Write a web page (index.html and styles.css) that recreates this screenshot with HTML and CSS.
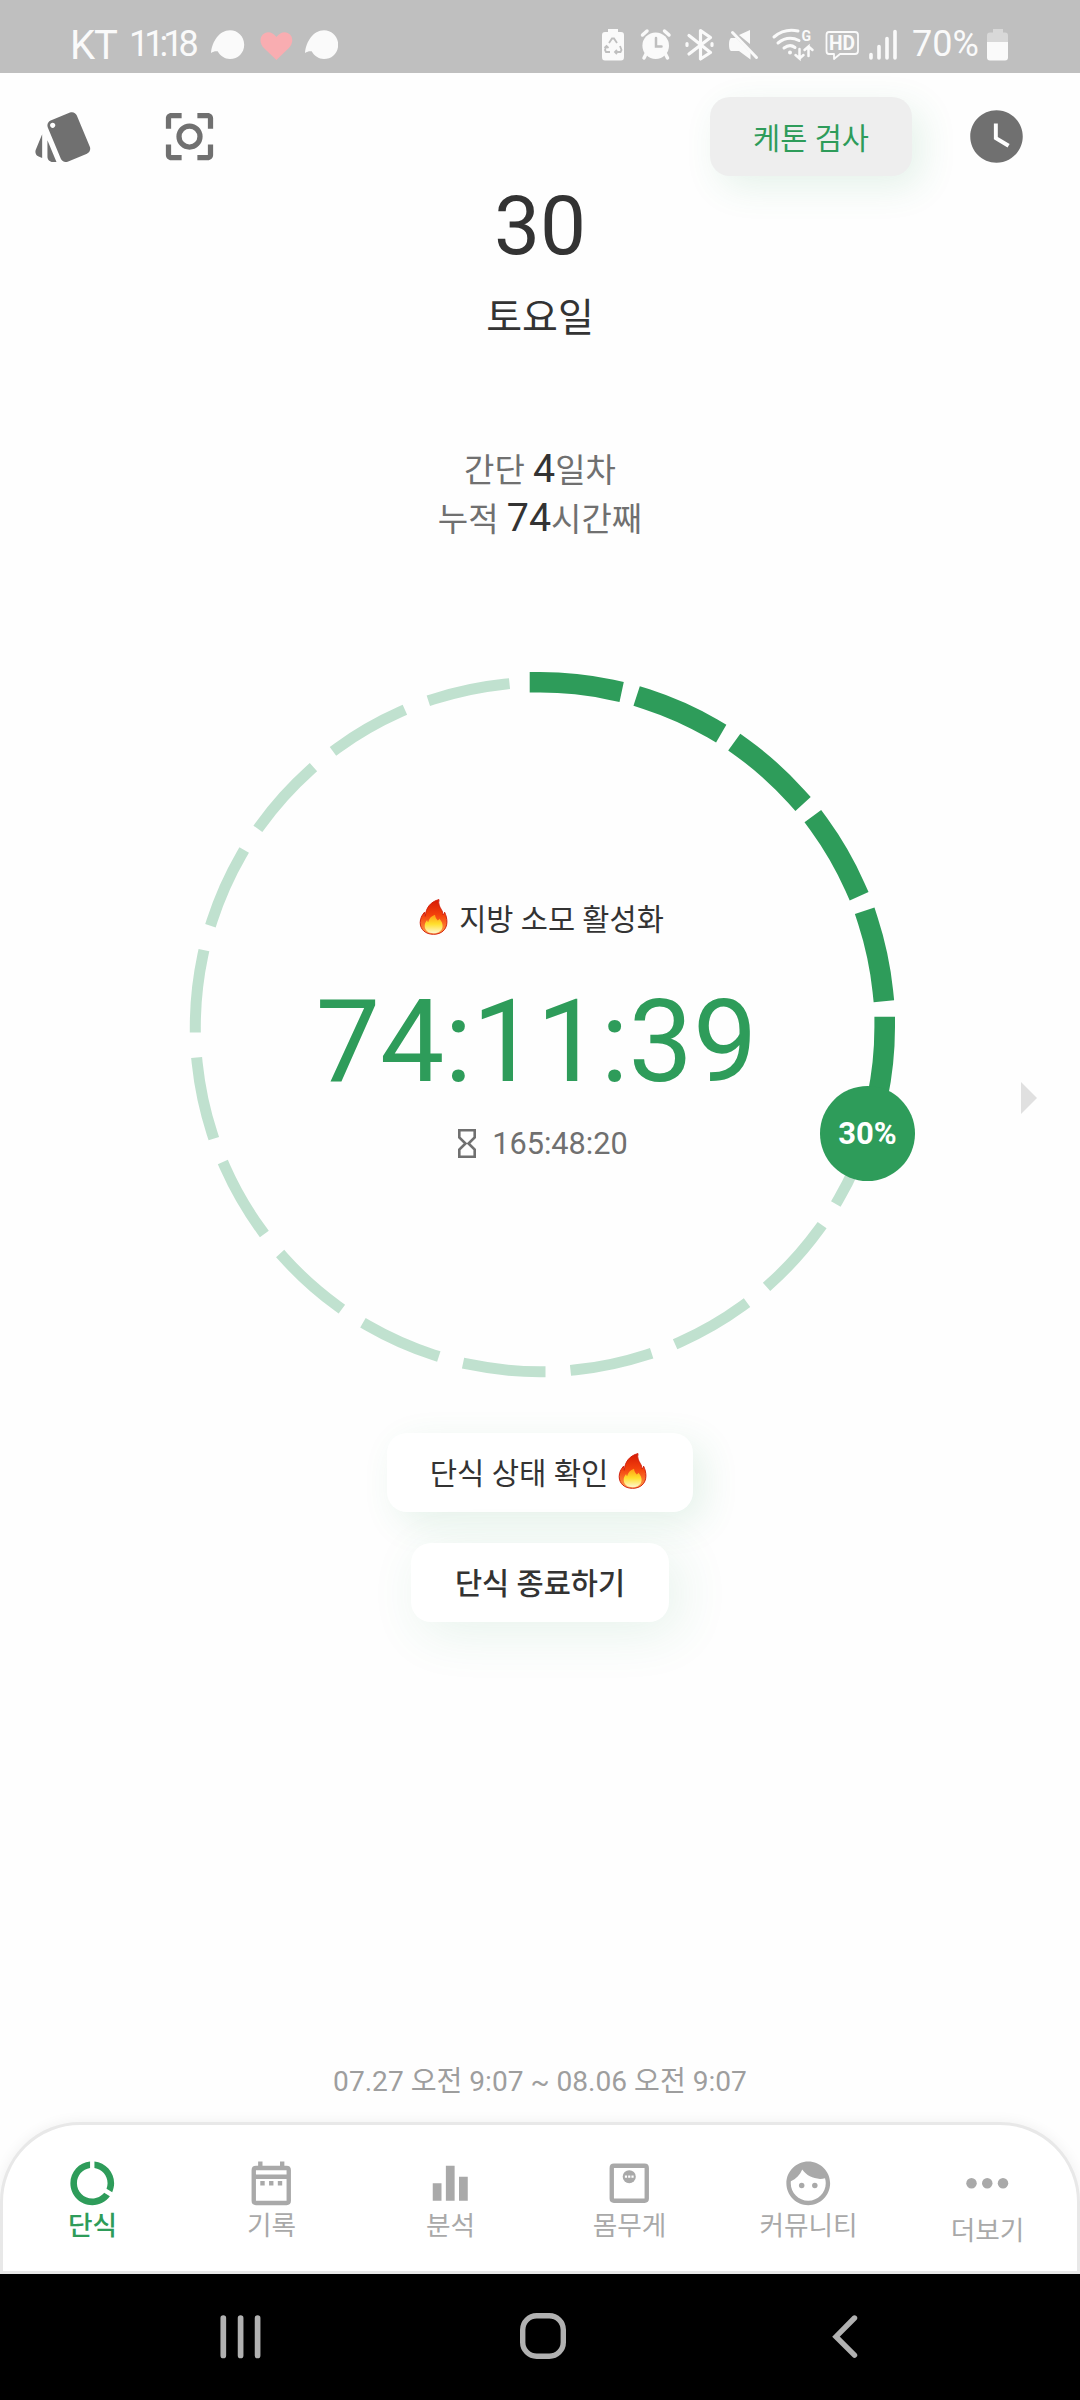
FILE: index.html
```html
<!DOCTYPE html>
<html lang="ko">
<head>
    <meta charset="UTF-8">
    <meta name="viewport" content="width=device-width, initial-scale=1.0">
    <title>단식</title>
    <link rel="stylesheet" href="styles.css">
</head>
<body>

<!-- Status bar -->
<div class="status-bar">
    <span class="carrier">KT</span>
    <span class="clock">11:18</span>
    <svg class="notice-icons" width="128" height="73" viewBox="210 0 128 73">
        <g fill="#fafafa">
            <path id="bubble" d="M230 30.300c8 0 14.200 6.300 14.200 14.400S238 59 230 59c-5.400 0-9.700-3-12.300-7.700-2.400-.4-4.500.3-6.700 1.700C212 42 219 30.300 230 30.300z"/>
            <use href="#bubble" x="94"/>
        </g>
        <path fill="#f9adb1" d="M276.400 60l-12-11.500c-5-5-4.700-10.500-1.800-13.800 3.400-3.800 9.800-3.400 13.800 2.300 4-5.700 10.400-6.100 13.800-2.300 2.900 3.300 3.200 8.800-1.800 13.800z"/>
    </svg>
    <svg class="status-icons" width="304" height="73" viewBox="596 0 304 73">
        <!-- battery saver -->
        <path fill="#fafafa" d="M608 29h10v3h3q3 0 3 3v22q0 3.500-3 3.500h-16q-3 0-3-3.500v-22q0-3 3-3h3z"/>
        <path fill="none" stroke="#bfbfbf" stroke-width="1.800" d="M609 43l3-4.500h2l3 4.500M606.500 46l-1.500 4 1 2h4M620 46l1.500 4-1 2h-5M608.500 48l-2-2-2 2M617 50l-2 2 2 2"/>
        <!-- alarm -->
        <g stroke="#fafafa" stroke-linecap="round" stroke-width="3.500" fill="none">
            <circle cx="655.700" cy="45.700" r="13.300" fill="#fafafa" stroke="none"/>
            <path d="M642.500 35l4.500-4M669 35l-4.500-4M646 54l-2 4M665.500 54l2 4"/>
            <path stroke="#bfbfbf" stroke-width="2.500" d="M656 38v8.500h5.500"/>
        </g>
        <!-- bluetooth -->
        <path fill="none" stroke="#fafafa" stroke-width="3.200" stroke-linejoin="round" stroke-linecap="round" d="M689 35.500l21.500 17L700.500 59V30.500l10 7L689 54M687 43.500v2M712 43.500v2"/>
        <!-- sound off -->
        <path fill="#fafafa" d="M750 30v14L739 35zM731 38h5l14.500 15v6.500L739 51h-8q-2-1-2-6.500t2-6.500z"/>
        <path stroke="#fafafa" stroke-width="3" stroke-linecap="round" d="M732.500 32.500l24 25"/>
        <!-- wifi -->
        <g fill="none" stroke="#fafafa" stroke-width="3" stroke-linecap="round">
            <path d="M774 37q10.500-9 24-6M778 43q10-8 21-2.500M784 48q6-4.500 11-.5"/>
            <circle cx="790" cy="52.500" r="2" fill="#fafafa" stroke="none"/>
            <path stroke-width="2.500" d="M799.500 49v9.500l-4-3.500M799.500 58.500l4-3.500M808.500 56v-9.500l-4 3.500M808.500 46.500l4 3.500"/>
        </g>
        <text class="wifi-gen" x="801.500" y="41">G</text>
        <!-- HD voice -->
        <path fill="none" stroke="#fafafa" stroke-width="1.800" stroke-linejoin="round" d="M829 32h26q3 0 3 3v16q0 3-3 3h-15l-6 5v-5h-5q-2.500 0-2.500-3V35q0-3 2.500-3z"/>
        <text class="hd" x="829" y="50" textLength="26" lengthAdjust="spacingAndGlyphs">HD</text>
        <!-- signal -->
        <path stroke="#fafafa" stroke-width="3.600" stroke-linecap="round" d="M871 54.500v3.500M879 46.500V58M887 38.500V58M895 31.500V58"/>
    </svg>
    <span class="battery-level">70%</span>
    <svg class="battery" width="22" height="73" viewBox="0 0 22 73">
        <path fill="#d8d8d8" d="M6 29h10v3.500h2q3 0 3 3V42H0v-6.500q0-3 3-3h3z"/>
        <path fill="#fafafa" d="M0 42h21v15.500q0 3-3 3H3q-3 0-3-3z"/>
    </svg>
</div>

<!-- Toolbar -->
<div class="toolbar">
    <svg class="tool-icon" viewBox="0 0 24 24"><path d="M2.530 19.650l1.340.56v-9.030l-2.430 5.860c-.41 1.020.08 2.190 1.090 2.610zm19.500-3.700L17.070 3.980c-.31-.75-1.040-1.210-1.810-1.230-.26 0-.53.04-.79.15L7.100 5.950c-.75.31-1.210 1.030-1.230 1.800-.01.27.04.54.15.8l4.960 11.970c.31.76 1.050 1.220 1.830 1.230.26 0 .52-.05.77-.15l7.360-3.050c1.020-.42 1.510-1.590 1.090-2.600zM7.880 8.750c-.55 0-1-.45-1-1s.45-1 1-1 1 .45 1 1-.45 1-1 1zm-2 11c0 1.100.9 2 2 2h1.450l-3.450-8.340v6.340z"/></svg>
    <svg class="tool-icon focus-icon" viewBox="0 0 24 24"><path d="M5 15H3v4c0 1.100.9 2 2 2h4v-2H5v-4zM5 5h4V3H5c-1.100 0-2 .9-2 2v4h2V5zm14-2h-4v2h4v4h2V5c0-1.100-.9-2-2-2zm0 16h-4v2h4c1.100 0 2-.9 2-2v-4h-2v4z"/><circle cx="12" cy="12" r="4" fill="none" stroke="#707070" stroke-width="2"/></svg>
    <button class="ketone-button">케톤 검사</button>
    <svg class="tool-icon" viewBox="0 0 24 24"><path d="M12 2C6.500 2 2 6.500 2 12s4.500 10 10 10 10-4.500 10-10S17.500 2 12 2zm4.200 14.200L11 13V7h1.500v5.200l4.500 2.700-.8 1.300z"/></svg>
</div>

<!-- Date and fasting summary -->
<div class="date">
    <div class="day">30</div>
    <div class="weekday">토요일</div>
</div>
<div class="summary">
    <div>간단 <b>4</b>일차</div>
    <div>누적 <b>74</b>시간째</div>
</div>

<!-- Timer -->
<div class="timer">
    <svg class="ring" width="720" height="720" viewBox="-360 -360 720 720">
        <g fill="none" stroke-linecap="square" transform="rotate(-90)">
            <circle r="344.700" stroke="#c0e1cf" stroke-width="11" pathLength="360" stroke-dasharray="12 6"/>
            <circle r="344.700" stroke="#2e9c5a" stroke-width="20.600" pathLength="360" stroke-dasharray="12 6 12 6 12 6 12 6 12 6 12 258"/>
        </g>
    </svg>
    <div class="timer-text">
        <div class="stage">
            <svg class="fire" viewBox="0 0 28 36">
                <defs>
                    <linearGradient id="flame" x1="0" y1="0" x2="0" y2="1">
                        <stop offset="0" stop-color="#d61a05"/>
                        <stop offset=".45" stop-color="#f4420c"/>
                        <stop offset="1" stop-color="#ffa24a"/>
                    </linearGradient>
                    <linearGradient id="flame-core" x1="0" y1="0" x2="0" y2="1">
                        <stop offset="0" stop-color="#ff9c12"/>
                        <stop offset=".5" stop-color="#ffe02e"/>
                        <stop offset="1" stop-color="#fff6d0"/>
                    </linearGradient>
                </defs>
                <path id="flame-outer" fill="url(#flame)" stroke="#d3220f" stroke-width="1" d="M19.500.6c-1 4.400.6 7.200 2.300 9.900 1.100 1.800 1.500 3.500 1.600 5.500.9-.7 1.400-1.600 1.700-2.800 1.500 3.200 2.400 6.500 2.300 10C27.200 30.500 22 35.300 14 35.300S.7 30.500.7 23.600c0-3.600 1.600-7.500 4.300-10.400-.1 1.800.1 3 .8 4.200C6.300 8.500 11.500 2.500 19.500.6z"/>
                <path id="flame-inner" fill="url(#flame-core)" d="M15.500 15.800c.3 2.800 1.200 4.200 2.800 5.800.8-.5 1.200-1 1.600-1.900 2 2.200 3.400 4.700 3.200 7.600-.3 4.300-3.800 7-9.100 7s-8.600-2.800-8.800-7c-.1-2.500.8-4.600 2.400-6.400.1 1 .4 1.700 1 2.300.9-3.600 3.200-6.200 6.900-7.400z"/>
            </svg>
            <span>지방 소모 활성화</span>
        </div>
        <div class="elapsed">74:11:39</div>
        <div class="remaining">
            <svg width="18" height="29" viewBox="0 0 18 29"><path fill="none" stroke="#707070" stroke-width="2.600" d="M1.300 1.300h15.400v7.200L10.500 14.500l6.200 6v7.200H1.300v-7.200l6.200-6-6.200-6z"/></svg>
            <span>165:48:20</span>
        </div>
    </div>
    <div class="percent">30%</div>
    <div class="next"></div>
</div>

<div class="actions">
    <button class="action-button">단식 상태 확인
        <svg class="fire" viewBox="0 0 28 36"><use href="#flame-outer"/><use href="#flame-inner"/></svg>
    </button>
    <button class="action-button finish">단식 종료하기</button>
</div>

<div class="period">07.27 오전 9:07 ~ 08.06 오전 9:07</div>

<!-- Tabs -->
<nav class="tabs">
    <div class="tab active">
        <svg viewBox="0 0 24 24"><path d="M13 2.050v3.030c3.390.49 6 3.390 6 6.920 0 .9-.18 1.750-.48 2.540l2.600 1.530c.56-1.240.88-2.620.88-4.070 0-5.180-3.950-9.450-9-9.950zM12 19c-3.870 0-7-3.130-7-7 0-3.530 2.610-6.430 6-6.920V2.050c-5.060.5-9 4.760-9 9.950 0 5.520 4.470 10 9.990 10 3.310 0 6.240-1.610 8.060-4.090l-2.600-1.530C16.170 17.980 14.210 19 12 19z"/></svg>
        <span>단식</span>
    </div>
    <div class="tab">
        <svg viewBox="0 0 24 24"><path fill-rule="evenodd" d="M6 2h2v2h8V2h2v2h1q2 0 2 2v14q0 2-2 2H5q-2 0-2-2V6q0-2 2-2h1zM5 6v2h14V6zM5 10v10h14V10zM7 11h2v2H7zM11 11h2v2h-2zM15 11h2v2h-2z"/></svg>
        <span>기록</span>
    </div>
    <div class="tab">
        <svg viewBox="0 0 24 24"><path d="M4 12h4v8H4zM10 4h4v16h-4zM16 9h4v11h-4z"/></svg>
        <span>분석</span>
    </div>
    <div class="tab">
        <svg viewBox="0 0 24 24"><path fill-rule="evenodd" d="M5 3h14q2 0 2 2v14q0 2-2 2H5q-2 0-2-2V5q0-2 2-2zM5 5v14h14V5z"/><circle cx="12" cy="9" r="3"/><path fill="#fff" d="M10 8.500h1v1h-1zM11.500 8.500h1v1h-1zM13 8.500h1v1h-1z"/></svg>
        <span>몸무게</span>
    </div>
    <div class="tab">
        <svg viewBox="0 0 24 24"><circle cx="9" cy="13" r="1.250"/><circle cx="15" cy="13" r="1.250"/><path d="M12 2C6.480 2 2 6.480 2 12s4.480 10 10 10 10-4.480 10-10S17.520 2 12 2zm0 18c-4.410 0-8-3.590-8-8 0-.29.02-.58.05-.86 2.360-1.050 4.230-2.980 5.210-5.370C11.070 8.330 14.050 10 17.420 10c.78 0 1.530-.09 2.250-.26.21.71.33 1.470.33 2.260 0 4.410-3.590 8-8 8z"/></svg>
        <span>커뮤니티</span>
    </div>
    <div class="tab more">
        <svg viewBox="0 0 24 24"><circle cx="4.800" cy="12" r="2.400"/><circle cx="12" cy="12" r="2.400"/><circle cx="19.200" cy="12" r="2.400"/></svg>
        <span>더보기</span>
    </div>
</nav>

<!-- System navigation -->
<div class="system-nav">
    <svg width="41" height="46" viewBox="0 0 41 46"><path stroke="#b1b1b1" stroke-width="5.700" stroke-linecap="round" d="M3.300 5v37.500M20.600 5v37.500M37.600 5v37.500"/></svg>
    <svg class="home" width="46" height="46" viewBox="0 0 46 46"><rect x="2.700" y="2.700" width="40.600" height="40.600" rx="14" fill="none" stroke="#b1b1b1" stroke-width="5.400"/></svg>
    <svg width="26" height="46" viewBox="0 0 26 46"><path fill="none" stroke="#b1b1b1" stroke-width="5.400" stroke-linecap="round" d="M22.500 5L4 23.700l18.500 18.500"/></svg>
</div>

</body>
</html>
```
FILE: styles.css
```css
* {
    box-sizing: border-box;
}

body {
    margin: 0;
    width: 1080px;
    height: 2400px;
    display: flex;
    flex-direction: column;
    background-color: #fefefe;
    color: #333;
    font-family: Roboto, "Noto Sans CJK KR", sans-serif;
    overflow: hidden;
}

svg {
    display: block;
    flex: none;
}

button {
    border: none;
    font-family: inherit;
    color: #333;
}

/* Status bar */
.status-bar {
    height: 73px;
    display: flex;
    align-items: center;
    padding-left: 70px;
    background-color: #bfbfbf;
    color: #fafafa;
    white-space: nowrap;
}

.carrier {
    width: 59px;
    padding-top: 17px;
    font-size: 40px;
    letter-spacing: -1px;
}

.clock {
    width: 81px;
    padding-top: 15px;
    font-size: 36px;
    letter-spacing: -5px;
}

.status-icons {
    margin-left: 258px;
}

.wifi-gen {
    font-size: 14px;
    font-weight: 700;
    fill: #fafafa;
}

.hd {
    font-size: 20px;
    font-weight: 700;
    fill: #fafafa;
}

.battery-level {
    width: 75px;
    margin-left: 12px;
    padding-top: 15px;
    font-size: 36px;
}

/* Toolbar */
.toolbar {
    height: 122px;
    display: flex;
    align-items: center;
    padding: 4px 52px 0 32px;
}

.tool-icon {
    width: 63px;
    height: 63px;
    fill: #707070;
}

.focus-icon {
    margin-left: 63px;
    margin-right: auto;
}

.ketone-button {
    width: 202px;
    height: 79px;
    margin-right: 53px;
    padding: 0;
    border-radius: 20px;
    background-color: #eee;
    color: #2e9c5a;
    font-size: 29.500px;
    box-shadow: 10px 11px 36px rgba(46, 156, 90, 0.12);
}

/* Date */
.date {
    height: 220px;
    text-align: center;
    overflow: hidden;
}

.day {
    height: 83px;
    font-size: 82px;
    line-height: 62px;
}

.weekday {
    font-size: 39px;
    line-height: 80px;
}

.summary {
    height: 240px;
    padding-top: 30px;
    color: #707070;
    text-align: center;
    font-size: 33px;
    line-height: 47px;
}

.summary b {
    color: #333;
    font-size: 39.400px;
    font-weight: 400;
}

/* Timer */
.timer {
    display: grid;
    height: 745px;
    justify-items: center;
    padding-top: 12px;
    position: relative;
}

.ring,
.timer-text {
    grid-area: 1 / 1;
}

.timer-text {
    display: flex;
    flex-direction: column;
    align-items: center;
    padding-top: 225px;
}

.stage {
    display: flex;
    align-items: center;
    gap: 11px;
    height: 50px;
    margin-left: 3px;
    font-size: 29.500px;
}

.elapsed {
    color: #2e9c5a;
    font-size: 114.500px;
    line-height: 136px;
    margin-top: 32px;
    margin-right: 7px;
}

.fire {
    width: 29px;
    height: 36px;
}

.remaining {
    display: flex;
    align-items: center;
    gap: 16px;
    margin-top: 16px;
    margin-left: 6px;
    color: #707070;
    font-size: 30.700px;
}

.percent {
    position: absolute;
    left: 820px;
    top: 431px;
    width: 95px;
    height: 95px;
    border-radius: 50%;
    background-color: #2e9c5a;
    color: #fff;
    font-size: 31px;
    font-weight: 700;
    line-height: 95px;
    text-align: center;
}

.next {
    position: absolute;
    left: 1021px;
    top: 427px;
    border-left: 16px solid #e0e0e0;
    border-top: 16px solid transparent;
    border-bottom: 16px solid transparent;
}

/* Buttons under the ring */
.actions {
    height: 650px;
    display: flex;
    flex-direction: column;
    align-items: center;
    gap: 31px;
    padding-top: 33px;
}

.action-button {
    flex: none;
    width: 306px;
    height: 79px;
    padding: 0 3px 3px 0;
    display: flex;
    align-items: center;
    justify-content: center;
    gap: 10px;
    border-radius: 20px;
    background-color: #fff;
    font-size: 29.700px;
    box-shadow: 11px 11px 36px rgba(46, 156, 90, 0.12);
}

.finish {
    width: 258px;
    padding-right: 0;
    font-size: 29.500px;
    font-weight: 500;
    box-shadow: 10px 11px 52px rgba(46, 156, 90, 0.11);
}

.period {
    height: 72px;
    color: #9e9e9e;
    font-size: 28.100px;
    line-height: 64px;
    text-align: center;
}

/* Tabs */
.tabs {
    height: 152px;
    display: flex;
    padding-top: 32px;
    background-color: #fff;
    border: 3px solid #e8e8e8;
    border-radius: 80px 80px 0 0;
    box-shadow: 0 0 14px rgba(0, 0, 0, 0.06);
}

.tab {
    flex: 1;
    display: flex;
    flex-direction: column;
    align-items: center;
    color: #a9a9a9;
    font-size: 26.700px;
    line-height: 33px;
    white-space: nowrap;
}

.tab svg {
    width: 52.500px;
    height: 52.500px;
    fill: #a9a9a9;
}

.active {
    color: #2e9c5a;
    font-weight: 500;
}

.active svg {
    fill: #2e9c5a;
}

.more span {
    padding-top: 5px;
}

/* System navigation */
.system-nav {
    flex: 1;
    display: flex;
    justify-content: space-between;
    padding: 39px 222px 0 220px;
    background-color: #000;
    z-index: 1;
}

.home {
    margin-right: 8px;
}
```
